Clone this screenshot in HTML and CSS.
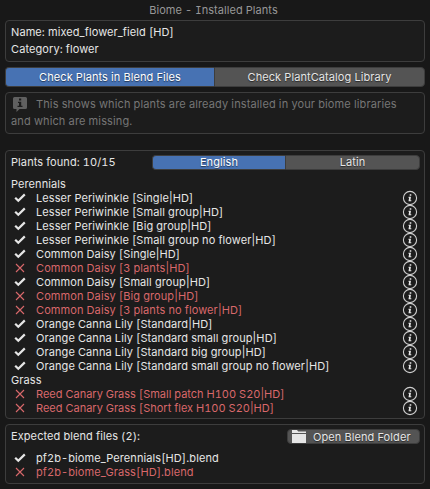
FILE: index.html
```
<!DOCTYPE html>
<html lang="en">
<head>
<meta charset="utf-8">
<title>Biome - Installed Plants</title>
<link rel="stylesheet" href="styles.css">
</head>
<body>
<svg class="defs" aria-hidden="true">
  <symbol id="check" viewBox="0 0 12 12"><path d="M1.200 5.700 4.300 8.800 10.800 2.400" fill="none" stroke="#e6e6e6" stroke-width="2.200"/></symbol>
  <symbol id="cross" viewBox="0 0 12 12"><path d="M2 2 10 10M10 2 2 10" fill="none" stroke="#d9686b" stroke-width="1.1"/></symbol>
  <symbol id="info" viewBox="0 0 16 16"><circle cx="8" cy="8" r="6.6" fill="none" stroke="#cfcfcf" stroke-width="1.1"/><path d="M7.7 4.2h1.6v1.5H7.7zM6.6 6.8H9L8.4 10.3h.9v1H6.5l.6-3.6h-.7z" fill="#e6e6e6"/></symbol>
</svg>
<main class="panel">
  <h1 class="title">Biome - <span class="cap-i">I</span>nstalled Plants</h1>
  <section class="box summary">
    <p>Name: mixed_flower_field [HD]</p>
    <p>Category: flower</p>
  </section>
  <div class="toggle source"><button class="active">Check Plants in Blend Files</button><button>Check PlantCatalog Library</button></div>
  <section class="box hint">
    <p><svg class="bubble" viewBox="0 0 14 15"><path d="M1.5 0h11Q14 0 14 1.5v9q0 1.5-1.5 1.5H6.5L3.5 15V12h-2Q0 12 0 10.500v-9Q0 0 1.500 0z" fill="#606060"/><path d="M6 1.500h2.200v2H6zM5 4.700h3.200v4H9.500V10h-5V8.700H6V6H5z" fill="#1c1c1c"/></svg><span>This shows which plants are already installed in your biome libraries</span></p>
    <p>and which are missing.</p>
  </section>
  <section class="box plants">
    <div class="head"><span>Plants found: 10/15</span><div class="toggle lang"><button class="active">English</button><button>Latin</button></div></div>
    <h2>Perennials</h2>
    <ul>
      <li><svg class="mark"><use href="#check"/></svg><span>Lesser Periwinkle [Single|HD]</span><svg class="info"><use href="#info"/></svg></li>
      <li><svg class="mark"><use href="#check"/></svg><span>Lesser Periwinkle [Small group|HD]</span><svg class="info"><use href="#info"/></svg></li>
      <li><svg class="mark"><use href="#check"/></svg><span>Lesser Periwinkle [Big group|HD]</span><svg class="info"><use href="#info"/></svg></li>
      <li><svg class="mark"><use href="#check"/></svg><span>Lesser Periwinkle [Small group no flower|HD]</span><svg class="info"><use href="#info"/></svg></li>
      <li><svg class="mark"><use href="#check"/></svg><span>Common Daisy [Single|HD]</span><svg class="info"><use href="#info"/></svg></li>
      <li class="missing"><svg class="mark"><use href="#cross"/></svg><span>Common Daisy [3 plants|HD]</span><svg class="info"><use href="#info"/></svg></li>
      <li><svg class="mark"><use href="#check"/></svg><span>Common Daisy [Small group|HD]</span><svg class="info"><use href="#info"/></svg></li>
      <li class="missing"><svg class="mark"><use href="#cross"/></svg><span>Common Daisy [Big group|HD]</span><svg class="info"><use href="#info"/></svg></li>
      <li class="missing"><svg class="mark"><use href="#cross"/></svg><span>Common Daisy [3 plants no flower|HD]</span><svg class="info"><use href="#info"/></svg></li>
      <li><svg class="mark"><use href="#check"/></svg><span>Orange Canna Lily [Standard|HD]</span><svg class="info"><use href="#info"/></svg></li>
      <li><svg class="mark"><use href="#check"/></svg><span>Orange Canna Lily [Standard small group|HD]</span><svg class="info"><use href="#info"/></svg></li>
      <li><svg class="mark"><use href="#check"/></svg><span>Orange Canna Lily [Standard big group|HD]</span><svg class="info"><use href="#info"/></svg></li>
      <li><svg class="mark"><use href="#check"/></svg><span>Orange Canna Lily [Standard small group no flower|HD]</span><svg class="info"><use href="#info"/></svg></li>
    </ul>
    <h2>Grass</h2>
    <ul class="grass">
      <li class="missing"><svg class="mark"><use href="#cross"/></svg><span>Reed Canary Grass [Small patch H100 S20|HD]</span><svg class="info"><use href="#info"/></svg></li>
      <li class="missing"><svg class="mark"><use href="#cross"/></svg><span>Reed Canary Grass [Short flex H100 S20|HD]</span><svg class="info"><use href="#info"/></svg></li>
    </ul>
  </section>
  <section class="box files">
    <div class="head"><span>Expected blend files (2):</span><button class="open"><svg viewBox="0 0 14 13"><path d="M0 0h5l1.200 1.500H14V3H0zM0 4h14v9H0z" fill="#e6e6e6"/></svg><span>Open Blend Folder</span></button></div>
    <ul>
      <li><svg class="mark"><use href="#check"/></svg><span>pf2b-biome_Perennials[HD].blend</span></li>
      <li class="missing"><svg class="mark"><use href="#cross"/></svg><span>pf2b-biome_Grass[HD].blend</span></li>
    </ul>
  </section>
</main>
</body>
</html>
```
FILE: styles.css
```
* { box-sizing: border-box; margin: 0; padding: 0; }
body {
  background: #181818;
  color: #e6e6e6;
  font: 400 11px/14px Inter, "Liberation Sans", sans-serif;
  letter-spacing: 0.09px;
  font-feature-settings: "tnum" 1, "calt" 0;
  white-space: nowrap;
}
.defs { display: none; }
.panel { width: 430px; height: 489px; padding: 3px 5px 0; }
.title { height: 17px; text-align: center; font-size: 11px; font-weight: 400; color: #979797; padding-right: 3px; letter-spacing: 0.06px; }
.cap-i { font-family: "DejaVu Sans Mono", monospace; font-size: 10.5px; line-height: 1; }
.box { border: 1px solid #3d3d3d; border-radius: 4px; background: #1c1c1c; padding: 0 5px; }
.summary, .hint { height: 42px; padding-top: 3px; line-height: 17px; }
.toggle { display: flex; }
button { border: 0; background: #545454; color: #e6e6e6; font: inherit; letter-spacing: inherit; font-feature-settings: inherit; text-shadow: 0 1px 1px #0008; text-align: center; }
.toggle button { flex: 1; border: 1px solid #3d3d3d; }
.toggle button:first-child { border-radius: 4px 0 0 4px; border-right: 0; }
.toggle button:last-child { border-radius: 0 4px 4px 0; }
.toggle .active { background: #4772b3; color: #fff; }
.source { height: 20px; margin: 5px 0; }
.source button:first-child { flex: 0 0 209px; }
.hint { color: #767676; letter-spacing: 0.13px; }
.hint p:first-child { display: flex; }
.bubble { width: 14px; height: 15px; margin: 1px 9px 0 2px; }
.plants { height: 269px; margin-top: 16px; padding-top: 4px; }
.head { display: flex; justify-content: space-between; align-items: center; height: 15px; }
.lang { width: 268px; height: 15px; margin-right: -1px; }
.lang button { line-height: 12px; padding-bottom: 2px; }
.lang button:first-child { flex: 0 0 133px; }
h2 { font-size: 11px; font-weight: 400; height: 14px; }
.plants .head { margin-bottom: 7px; }
.plants .head > span { position: relative; top: -1px; }
ul { list-style: none; }
li { display: flex; align-items: center; height: 14px; }
.grass { letter-spacing: 0; }
.missing { color: #d9686b; }
.mark { width: 12px; height: 12px; margin: 0 10px 0 3px; }
.info { width: 16px; height: 16px; margin: -1px 1px -1px auto; }
.files { height: 60px; margin-top: 5px; padding-top: 4px; }
.files .head { margin-bottom: 7px; }
.files .head > span { position: relative; top: -1px; }
.open { display: flex; align-items: center; width: 133px; height: 15px; margin-right: -1px; border: 1px solid #3d3d3d; border-radius: 4px; padding-left: 4px; gap: 7px; }
.open svg { width: 14px; height: 13px; }
```
